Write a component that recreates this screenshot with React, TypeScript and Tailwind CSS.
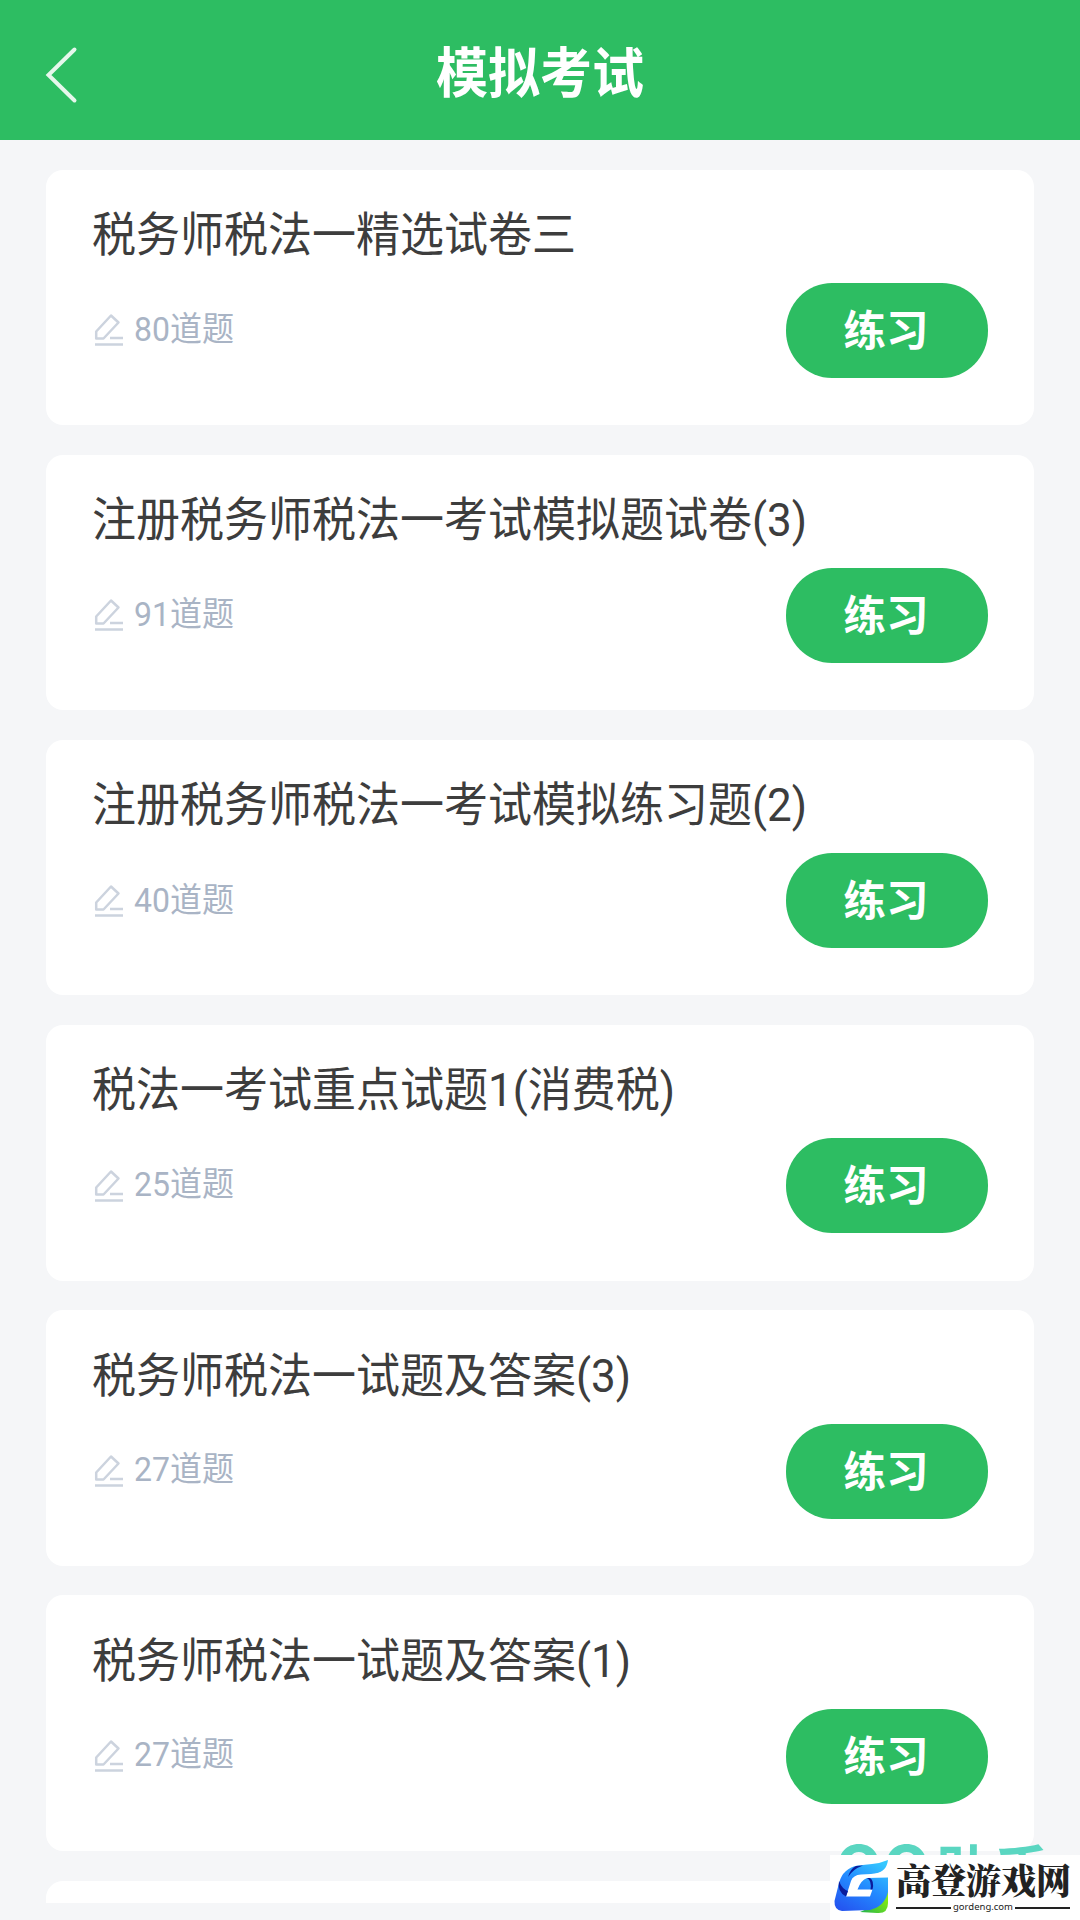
import React from 'react';

type Paper = {
  title: string;
  count: number;
};

const PAPERS: Paper[] = [
  { title: '税务师税法一精选试卷三', count: 80 },
  { title: '注册税务师税法一考试模拟题试卷(3)', count: 91 },
  { title: '注册税务师税法一考试模拟练习题(2)', count: 40 },
  { title: '税法一考试重点试题1(消费税)', count: 25 },
  { title: '税务师税法一试题及答案(3)', count: 27 },
  { title: '税务师税法一试题及答案(1)', count: 27 },
];

function BackIcon() {
  return (
    <svg viewBox="0 0 36 60" className="h-[60px] w-9" fill="none" stroke="#e6f7ec" strokeWidth="4" strokeLinecap="round">
      <path d="M30.5 4.5 L4.5 30 L30.5 55.5" />
    </svg>
  );
}

function PenIcon() {
  return (
    <svg viewBox="0 0 30 34" className="h-[34px] w-[30px] shrink-0" fill="none" stroke="#ccd3de" strokeWidth="2.5">
      <path d="M2.2 25.5 V18.5 L17 2.5 L24.5 9.5 L9.5 25.5 Z" strokeLinejoin="round" />
      <path d="M16 25 H29 M1 31.5 H29" />
    </svg>
  );
}

function PaperCard({ paper }: { paper: Paper }) {
  return (
    <div className="flex h-[255.5px] shrink-0 flex-col rounded-[17px] bg-white pl-[46px] pr-[46px] pt-[33.4px]">
      <h2 className="h-16 scale-y-[1.05] whitespace-nowrap text-[44px] leading-[64px] text-[#3d3d3d]">
        {paper.title}
      </h2>
      <div className="mt-[15.4px] flex h-24 items-center justify-between">
        <div className="flex items-center gap-[10px] pl-[2px]">
          <PenIcon />
          <span className="scale-y-[1.05] pb-[2px] text-[32px] leading-10 text-[#a9b4c5]">{paper.count}道题</span>
        </div>
        <button className="h-[95px] w-[202px] rounded-[46px/47px] bg-[#2dbd62] pr-[2px] pt-[3px] text-white">
          <span className="block text-[42.5px] font-bold leading-[60px]">练习</span>
        </button>
      </div>
    </div>
  );
}

function SiteLogo() {
  return (
    <svg viewBox="0 0 56 56" className="h-14 w-14 shrink-0">
      <defs>
        <linearGradient id="blue" x1="0.8" y1="0" x2="0.2" y2="1">
          <stop offset="0" stopColor="#35c8ff" />
          <stop offset="0.5" stopColor="#2389ff" />
          <stop offset="1" stopColor="#2456f0" />
        </linearGradient>
        <linearGradient id="green" x1="1" y1="0" x2="0" y2="1">
          <stop offset="0" stopColor="#a4ff00" />
          <stop offset="1" stopColor="#22b14c" />
        </linearGradient>
      </defs>
      <path d="M54 26 L54 43 Q54 54 43 53 L26 52 L48 42 Z" fill="url(#green)" />
      <path
        d="M54 0 C53 8 49 12 41 14 L54 17 V32 Q51 46 36 50 L8 51 Q0 50 0.5 41 L5 23 Q9 8 24 5.5 L38 4 Q47 3 54 0 Z"
        fill="url(#blue)"
      />
      {/* open letter shape in the middle of the mark */}
      <path d="M54 9 Q48 13 37 14 L27 14.5 Q19 15 17 21 L12 36.5 H36 L38.5 29.5 H23.5 Q27 20 33 18 L54 17.5 Z" fill="#fff" />
      <path d="M29 5.5 Q19 9 14 17 Q16 9 22 6 Z M5 21 Q8 29 14 31 L12 36.5 Q3 32 5 21 Z M33 18 Q38 21 36.5 29.5 H38.5 Q40.5 21 36 18 Z" fill="#0b1c9c" />
    </svg>
  );
}

export default function App() {
  return (
    <div className="relative flex h-[1920px] w-[1080px] flex-col overflow-hidden bg-[#f5f6f8] font-[Roboto,'Noto_Sans_CJK_SC',sans-serif]">
      <header className="grid h-[140px] shrink-0 grid-cols-[1fr_auto_1fr] items-center bg-[#2dbd62] pl-[44px] pr-[44px]">
        <div className="pt-[10px]">
          <BackIcon />
        </div>
        <h1 className="scale-y-[1.04] pt-[9px] text-[52px] font-bold leading-[72px] text-white">模拟考试</h1>
      </header>

      <main className="flex h-[1763px] shrink-0 flex-col gap-[29.7px] overflow-hidden px-[46px] pt-[29.5px]">
        {PAPERS.map((paper) => (
          <PaperCard key={paper.title} paper={paper} />
        ))}
        <div className="h-[256px] shrink-0 rounded-[17px] bg-white" />
      </main>

      {/* Site mark over the bottom right corner */}
      <div className="absolute left-[835px] top-[1839px] flex whitespace-nowrap font-['Noto_Sans_CJK_SC',sans-serif] text-[58px] font-bold leading-[60px] text-[#5ad6c1]">
        <span className="-mt-[5px] w-[100px] text-[62px]">QQ</span>
        <span>助手</span>
      </div>
      <div className="absolute bottom-0 right-0 flex h-[65px] w-[250px] items-center bg-white pl-1">
        <SiteLogo />
        <div className="ml-[6px] flex w-[174px] flex-col">
          <div className="whitespace-nowrap font-['Noto_Serif_CJK_SC','Noto_Sans_CJK_SC',serif] text-[35px] font-black leading-[36px] text-[#222]">
            高登游戏网
          </div>
          <div className="mt-1 flex items-center gap-[2px] font-['Noto_Sans',sans-serif] text-[9.5px] leading-3 text-[#222]">
            <span className="h-[2px] flex-1 bg-[#222]" />
            <span className="pb-px">gordeng.com</span>
            <span className="h-[2px] flex-1 bg-[#222]" />
          </div>
        </div>
      </div>
    </div>
  );
}
